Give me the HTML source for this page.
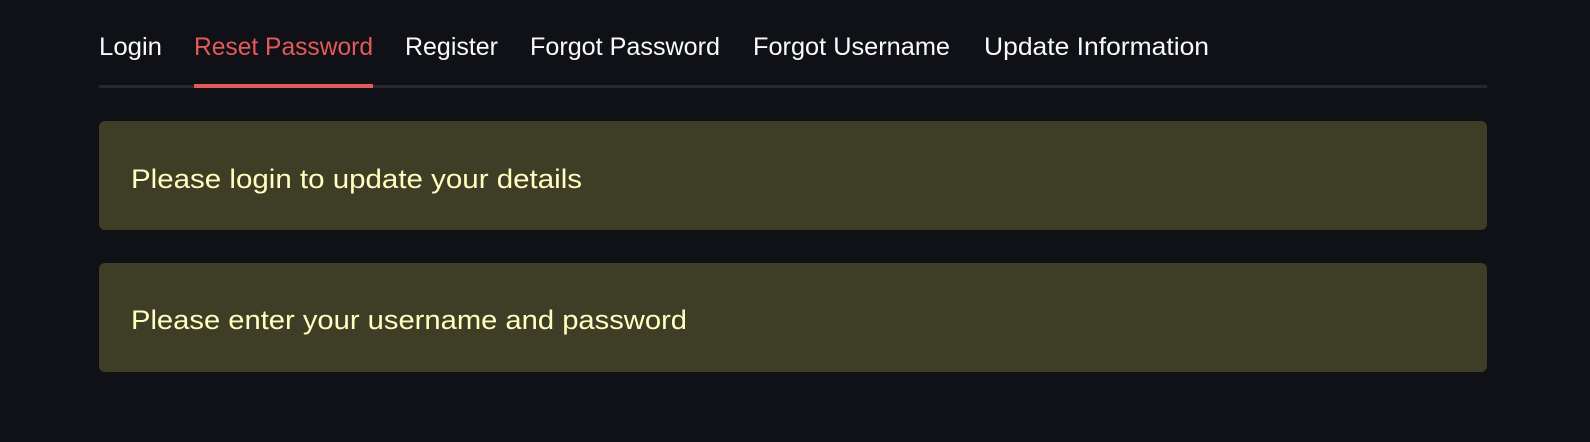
<!DOCTYPE html>
<html><head><style>
html,body{margin:0;padding:0;background:#0f1117;width:1590px;height:442px;overflow:hidden}
svg{display:block}
</style></head><body>
<svg width="1590" height="442" xmlns="http://www.w3.org/2000/svg" font-family="Liberation Sans, sans-serif">
<rect width="1590" height="442" fill="#0f1117"/>
<g font-size="25" fill="#fafafa">
<text x="99" y="55" textLength="63" lengthAdjust="spacingAndGlyphs">Login</text>
<text x="194" y="55" textLength="179" lengthAdjust="spacingAndGlyphs" fill="#e35a5a">Reset Password</text>
<text x="405" y="55" textLength="93" lengthAdjust="spacingAndGlyphs">Register</text>
<text x="530" y="55" textLength="190" lengthAdjust="spacingAndGlyphs">Forgot Password</text>
<text x="753" y="55" textLength="197" lengthAdjust="spacingAndGlyphs">Forgot Username</text>
<text x="984" y="55" textLength="225" lengthAdjust="spacingAndGlyphs">Update Information</text>
</g>
<rect x="99" y="85" width="1388" height="3" fill="#262730"/>
<rect x="194" y="84" width="179" height="4" fill="#e35a5a"/>
<rect x="99" y="121" width="1388" height="109" rx="6" fill="#3e3d25"/>
<rect x="99" y="263" width="1388" height="109" rx="6" fill="#3e3d25"/>
<g font-size="27" fill="#ffffc2">
<text x="131" y="188" textLength="451" lengthAdjust="spacingAndGlyphs">Please login to update your details</text>
<text x="131" y="329" textLength="556" lengthAdjust="spacingAndGlyphs">Please enter your username and password</text>
</g>
</svg>
</body></html>
